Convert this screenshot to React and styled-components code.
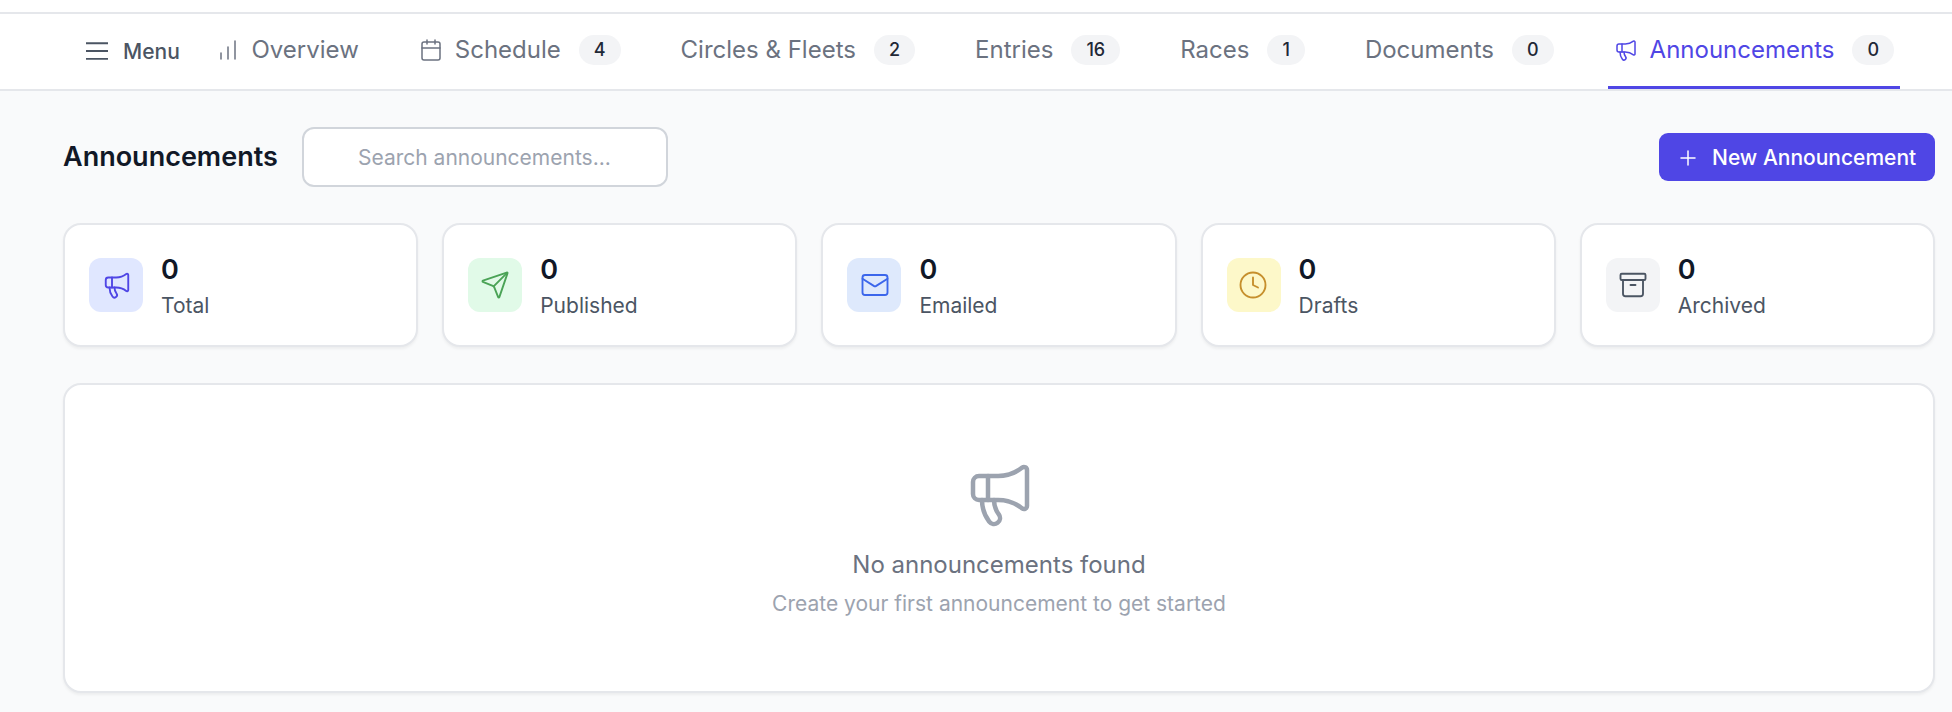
import React from "react";
import styled, { createGlobalStyle } from "styled-components";
import { Archive, Calendar, ChartNoAxesColumnIncreasing, Clock, Mail, Megaphone, Plus, Send } from "lucide-react";

const TABS = [
  { label: "Overview", icon: ChartNoAxesColumnIncreasing },
  { label: "Schedule", icon: Calendar, count: 4 },
  { label: "Circles & Fleets", count: 2 },
  { label: "Entries", count: 16 },
  { label: "Races", count: 1 },
  { label: "Documents", count: 0 },
  { label: "Announcements", icon: Megaphone, count: 0, active: true },
];

const STATS = [
  { label: "Total", value: 0, icon: Megaphone, color: "#4f46e5", tint: "#e0e7ff", nudge: 1 },
  { label: "Published", value: 0, icon: Send, color: "#4aa356", tint: "#e1fae8" },
  { label: "Emailed", value: 0, icon: Mail, color: "#3b66eb", tint: "#dee9fc", nudge: 1 },
  { label: "Drafts", value: 0, icon: Clock, color: "#c68f2c", tint: "#fdf8c9", nudge: -1 },
  { label: "Archived", value: 0, icon: Archive, color: "#4b5563", tint: "#f3f4f6" },
];

function Navigation() {
  return (
    <NavBar>
      <MenuButton type="button">
        <svg width="30" height="30" viewBox="0 0 24 24" stroke="currentColor" strokeWidth="1.5">
          <path d="M3.2 5.75h17.6M3.2 12h17.6M3.2 18.25h17.6" />
        </svg>
        Menu
      </MenuButton>
      <TabList>
        {TABS.map(({ label, icon: Icon, count, active }) => (
          <Tab key={label} href="#" $active={active}>
            {Icon ? <Icon size={24} strokeWidth={1.5} /> : null}
            <TabLabel>{label}</TabLabel>
            {count === undefined ? null : <Count>{count}</Count>}
          </Tab>
        ))}
      </TabList>
    </NavBar>
  );
}

function StatCard(props) {
  const { label, value, icon: Icon, color, tint, nudge = 0 } = props;

  return (
    <Card>
      <StatIcon $color={color} $tint={tint} $nudge={nudge}>
        <Icon size={30} strokeWidth={1.5} />
      </StatIcon>
      <div>
        <StatValue>{value}</StatValue>
        <StatLabel>{label}</StatLabel>
      </div>
    </Card>
  );
}

function App() {
  return (
    <Page>
      <GlobalStyle />
      <Navigation />
      <Content>
        <Toolbar>
          <Title>Announcements</Title>
          <Search type="text" placeholder="Search announcements..." />
          <NewButton type="button">
            <Plus size={24} strokeWidth={1.5} />
            New Announcement
          </NewButton>
        </Toolbar>
        <Stats>
          {STATS.map((stat) => (
            <StatCard key={stat.label} {...stat} />
          ))}
        </Stats>
        <EmptyState>
          <Megaphone size={72} strokeWidth={1.5} />
          <EmptyTitle>No announcements found</EmptyTitle>
          <EmptyHint>Create your first announcement to get started</EmptyHint>
        </EmptyState>
      </Content>
    </Page>
  );
}

export default App;

const GlobalStyle = createGlobalStyle`
  * {
    box-sizing: border-box;
  }

  body {
    margin: 0;
    overflow: hidden;
    background: #f9fafb;
    font-family: Inter, sans-serif;
    -webkit-font-smoothing: antialiased;
  }

  svg {
    flex-shrink: 0;
  }
`;

const Page = styled.div`
  height: 712px;
  padding-top: 12px;
  background: linear-gradient(#fff 12px, #f9fafb 12px);
`;

const NavBar = styled.nav`
  display: flex;
  height: 79px;
  padding-left: 82px;
  border-top: 2px solid #e5e7eb;
  border-bottom: 2px solid #e5e7eb;
  background: #fff;
`;

const MenuButton = styled.button`
  display: flex;
  align-items: center;
  gap: 11px;
  width: 127.5px;
  padding: 0;
  border: 0;
  background: none;
  color: #4b5563;
  font: 500 21px Inter, sans-serif;

  svg {
    margin-bottom: 2px;
  }
`;

const TabList = styled.div`
  display: flex;
  gap: 48px;
`;

const Tab = styled.a`
  display: flex;
  align-items: center;
  padding: 0 6px;
  border-bottom: 3px solid ${(p) => (p.$active ? "#4f46e5" : "transparent")};
  color: ${(p) => (p.$active ? "#4f46e5" : "#6b7280")};
  font-size: 24px;
  text-decoration: none;
  white-space: nowrap;

  svg {
    margin-right: 12px;
  }
`;

const TabLabel = styled.span`
  padding-bottom: 1px;
`;

const Count = styled.span`
  margin-left: 18px;
  padding: 0 15px;
  border-radius: 15px;
  background: #f3f4f6;
  color: #1f2937;
  font-size: 18px;
  font-weight: 500;
  line-height: 30px;
`;

const Content = styled.main`
  padding: 36px 17px 0 63px;
`;

const Toolbar = styled.header`
  display: flex;
  align-items: center;
  height: 60px;
`;

const Title = styled.h1`
  width: 215px;
  margin: 0 24px 0 0;
  padding-bottom: 1px;
  color: #111827;
  font-size: 27px;
  font-weight: 600;
  white-space: nowrap;
`;

const Search = styled.input`
  width: 366px;
  height: 60px;
  padding: 0 16px 0 54px;
  border: 2px solid #d1d5db;
  border-radius: 12px;
  background: #fff;
  font: 21px Inter, sans-serif;

  &::placeholder {
    color: #9ca3af;
  }
`;

const NewButton = styled.button`
  display: flex;
  align-items: center;
  gap: 12px;
  width: 276px;
  height: 48px;
  margin-left: auto;
  padding: 0 0 0 17px;
  border: 0;
  border-radius: 9px;
  background: #4f46e5;
  color: #fff;
  font: 500 21px Inter, sans-serif;
  white-space: nowrap;

  svg {
    margin-top: 2px;
  }
`;

const Stats = styled.section`
  display: grid;
  grid-template-columns: repeat(5, 1fr);
  gap: 24px;
  margin-top: 36px;
`;

const Card = styled.article`
  display: flex;
  align-items: center;
  gap: 18px;
  height: 124px;
  padding: 0 24px;
  border: 2px solid #e5e7eb;
  border-radius: 18px;
  background: #fff;
  box-shadow: 0 2px 3px rgba(0, 0, 0, 0.05);
`;

const StatIcon = styled.div`
  display: flex;
  align-items: center;
  width: 54px;
  height: 54px;
  padding-left: ${(p) => 12 + p.$nudge}px;
  border-radius: 12px;
  background: ${(p) => p.$tint};
  color: ${(p) => p.$color};
`;

const StatValue = styled.div`
  color: #111827;
  font-size: 27px;
  font-weight: 600;
  line-height: 42px;
`;

const StatLabel = styled.div`
  color: #4b5563;
  font-size: 21px;
  line-height: 30px;
`;

const EmptyState = styled.section`
  display: flex;
  flex-direction: column;
  align-items: center;
  height: 310px;
  margin-top: 36px;
  padding-top: 73px;
  border: 2px solid #e5e7eb;
  border-radius: 18px;
  background: #fff;
  color: #9ca3af;
  box-shadow: 0 2px 3px rgba(0, 0, 0, 0.05);

  svg {
    margin-left: 2px;
  }
`;

const EmptyTitle = styled.p`
  margin: 17px 0 6px;
  color: #6b7280;
  font-size: 24px;
  line-height: 36px;
`;

const EmptyHint = styled.p`
  margin: 0;
  font-size: 21px;
  line-height: 30px;
`;
